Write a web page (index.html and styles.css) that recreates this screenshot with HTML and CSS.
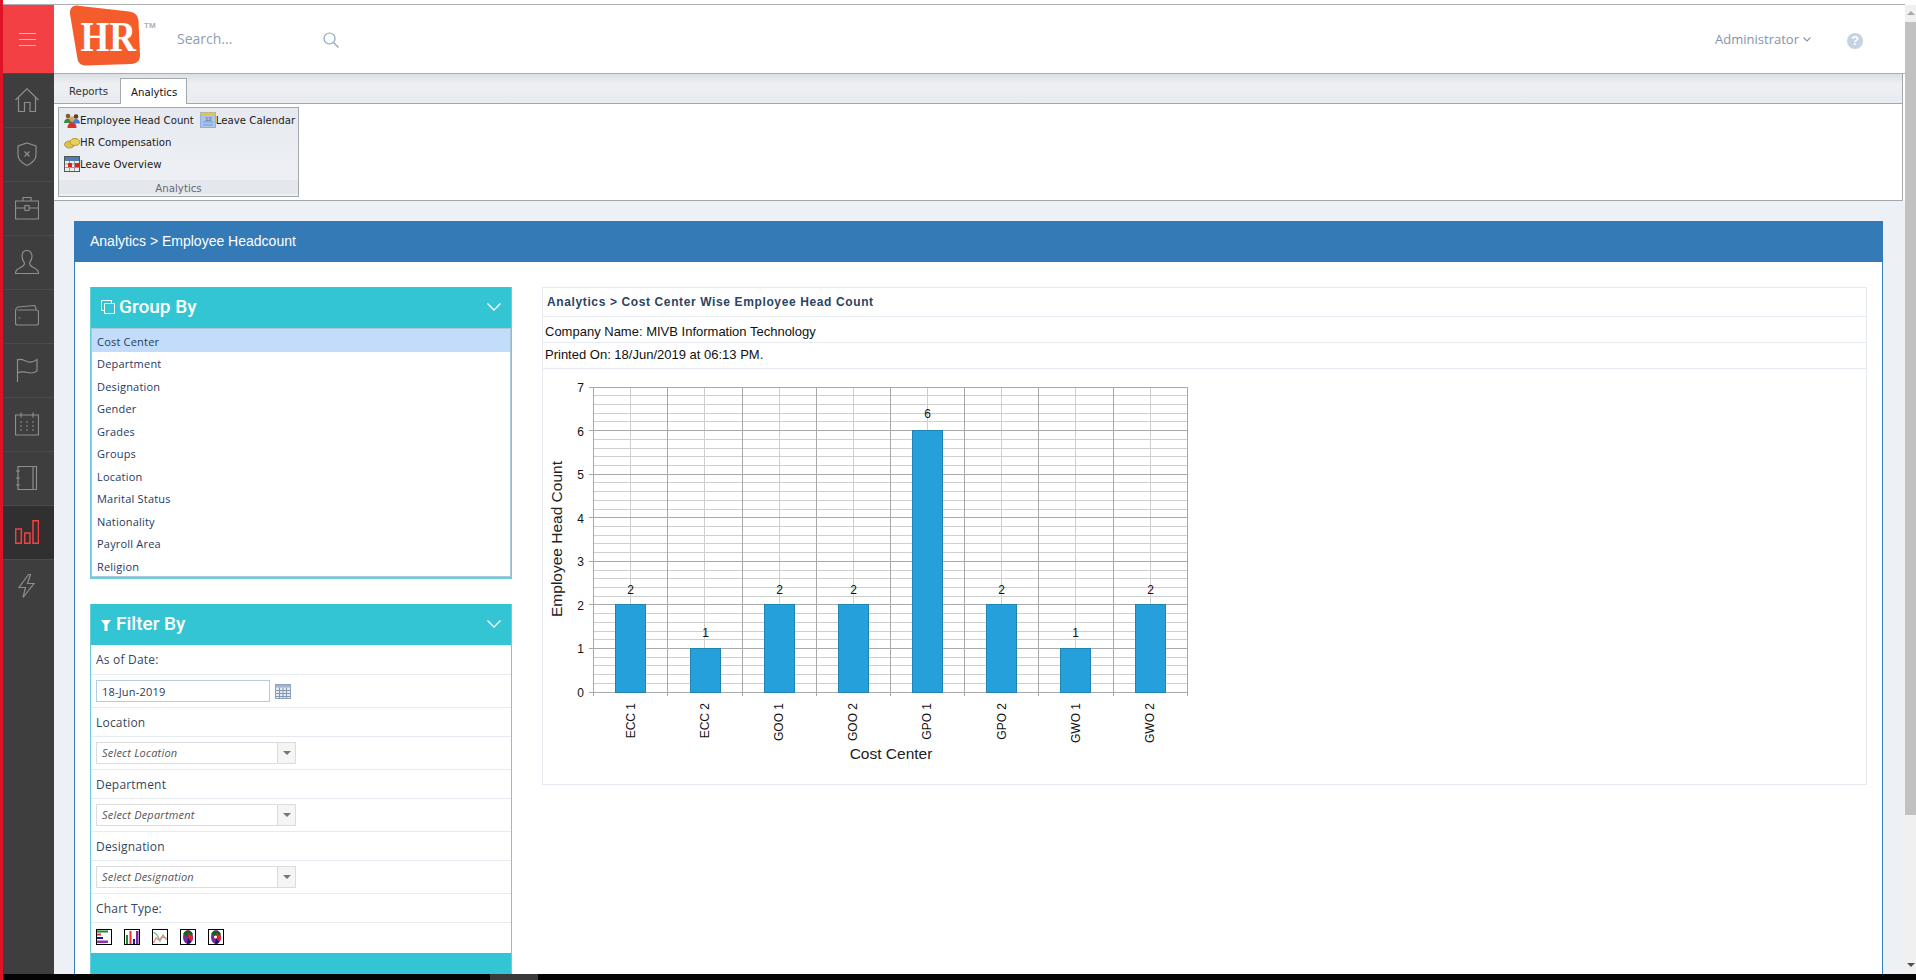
FILE: index.html
```html
<!DOCTYPE html>
<html lang="en">
<head>
<meta charset="utf-8">
<title>Analytics - Employee Headcount</title>
<link rel="stylesheet" href="styles.css">
</head>
<body>
<div class="page">
  <div class="edge"></div>
  <div class="rest">
    <div class="work">
      <div class="app">
        <nav class="sidebar">
          <div class="menu-btn"><span></span><span></span><span></span></div>
          <div class="nav-item"><svg class="nav-icon" viewBox="0 0 24 24"><path d="M.5 12 12 .8 23.5 12M3.5 9.5V23.5H9.5V14.5H15V23.5H20.5V9.5"/></svg></div>
          <div class="nav-item"><svg class="nav-icon" viewBox="0 0 24 24"><path d="M12 1 21 4V13C21 18 16 21.5 12 23.5 8 21.5 3 18 3 13V4ZM9.5 9.5l5 5m0-5-5 5"/></svg></div>
          <div class="nav-item"><svg class="nav-icon" viewBox="0 0 24 24"><path d="M.5 5H23.5V23H.5ZM8 5V1.5H16V5M.5 12H10M14 12H23.5M10 9.5H14V14.5H10Z"/></svg></div>
          <div class="nav-item"><svg class="nav-icon" viewBox="0 0 24 24"><path d="M12 .5C8.500.5 7 3.500 7 6.500 7 9.500 8.500 11.500 9.500 13 9.500 16 7.500 16.500 4.500 18 1.500 19.500.5 20.500.5 23.500H23.500C23.500 20.500 22.500 19.500 19.500 18 16.500 16.500 14.500 16 14.500 13 15.500 11.500 17 9.500 17 6.500 17 3.500 15.500.5 12 .5Z"/></svg></div>
          <div class="nav-item"><svg class="nav-icon" viewBox="0 0 24 24"><path d="M2.500 6H21.500Q23.500 6 23.500 8V19Q23.500 21 21.500 21H2.500Q.5 21 .5 19V8C.5 4.500 1 3.500 3 3L19 1.500Q21 1.500 21 6M3.500 14H5.500"/></svg></div>
          <div class="nav-item"><svg class="nav-icon" viewBox="0 0 24 24"><path d="M2.500 1V24.500M2.500 2C7 0 9.500 3 13.500 4 17.500 5 20 3 22 1.500V13C19 15 16 15.500 13 14.500 9 13.500 6 13.500 2.500 14.500"/></svg></div>
          <div class="nav-item"><svg class="nav-icon" viewBox="0 0 24 24"><path d="M.5 3H23.500V23H.5ZM6 .5V5.500M18 .5V5.500M5 10H7M11 10H13M17 10H19M5 14H7M11 14H13M17 14H19M5 18H7M11 18H13M17 18H19"/></svg></div>
          <div class="nav-item"><svg class="nav-icon" viewBox="0 0 24 24"><path d="M3 .5H21.500V23.500H3ZM18 .5V23.500M1 5H5M1 12H5M1 19H5"/></svg></div>
          <div class="nav-item active"><svg class="nav-icon" viewBox="0 0 24 24"><path d="M.7 9H6.300V23.300H.7ZM9.700 13H15V23.300H9.700ZM18 .7H23.500V23.300H18Z"/></svg></div>
          <div class="nav-item"><svg class="nav-icon" viewBox="0 0 24 24"><path d="M13.500.5 4 13.500H10.500L8 23.500 19 9.500H12.500L15.500.5Z"/></svg></div>
        </nav>
        <div class="main">
          <header class="topbar">
            <div class="logo">
              <svg class="logo-mark" viewBox="0 0 72 61"><path class="logo-shape" d="M1 9C.5 3 4 0 9 .7L60 6.500C66 7.500 69 10 69.500 16L71 50C71.300 56 68 58.500 62 59L17 60.500C12 60.500 9.500 58 8.500 54Z"/><text class="logo-text" transform="translate(11.500 46) scale(1 1.130)">HR</text></svg>
              <span class="tm">TM</span>
            </div>
            <div class="search">Search...</div>
            <svg class="search-icon" viewBox="0 0 16 16"><circle cx="6.500" cy="6.500" r="5.500"/><path d="M10.500 10.500 15.500 15.500"/></svg>
            <div class="user">Administrator<svg class="user-chev" viewBox="0 0 8 5"><path d="M.5.5 4 4 7.500.5"/></svg></div>
            <div class="help">?</div>
          </header>
          <section class="ribbon">
            <div class="ribbon-tabs">
              <span class="rtab">Reports</span>
              <span class="rtab current">Analytics</span>
            </div>
            <div class="ribbon-body">
              <div class="rgroup">
                <div class="rgroup-items">
                  <div class="ritem-line">
                    <span class="ritem"><svg class="ricon" viewBox="0 0 16 16"><circle cx="4" cy="4" r="2.300" fill="#8a5a2b"/><path d="M0 11c0-3 2-4.500 4-4.500S8 8 8 11Z" fill="#3d8a3a"/><circle cx="12" cy="4.500" r="2.300" fill="#5b3d20"/><path d="M8 11.500c0-3 2-4.500 4-4.500s4 1.500 4 4.500Z" fill="#3d7fd0"/><circle cx="8" cy="7" r="2.500" fill="#e0a060"/><path d="M3.500 16c0-4 2-5.500 4.500-5.500S12.500 12 12.500 16Z" fill="#d8302a"/></svg>Employee Head Count</span>
                    <span class="ritem second"><svg class="ricon" viewBox="0 0 16 16"><rect x=".5" y=".5" width="15" height="15" fill="#a9c4ea" stroke="#8fb0e0"/><rect x=".5" y=".5" width="15" height="2.500" fill="#e3c34a"/><path d="M3 10h10M3 13h10" stroke="#7c9cc8"/><text class="ricon-num" x="5" y="9">12</text></svg>Leave Calendar</span>
                  </div>
                  <div class="ritem-line"><span class="ritem"><svg class="ricon" viewBox="0 0 16 16"><ellipse cx="5.500" cy="10.500" rx="5" ry="3.500" fill="#dcc24a" stroke="#b59a2c"/><ellipse cx="11" cy="8" rx="5" ry="3.500" fill="#e8d060" stroke="#b59a2c"/></svg>HR Compensation</span></div>
                  <div class="ritem-line"><span class="ritem"><svg class="ricon" viewBox="0 0 16 16"><rect x=".5" y=".5" width="15" height="15" fill="#eee" stroke="#555"/><rect x="1" y="1" width="14" height="4" fill="#4f7fb0"/><path d="M1 8h14M1 11.500h14M5.500 5v10M10.500 5v10" stroke="#999"/><rect x="4" y="7" width="4" height="4" fill="#e02020"/><rect x="11" y="7" width="4" height="4" fill="#e02020"/></svg>Leave Overview</span></div>
                </div>
                <div class="rgroup-label">Analytics</div>
              </div>
            </div>
          </section>
          <div class="content">
            <div class="panel">
              <div class="panel-head">Analytics &gt; Employee Headcount</div>
              <div class="panel-body">
                <aside class="side">
                  <div class="box">
                    <div class="box-head">
                      <svg class="box-icon" viewBox="0 0 14 14"><path d="M3.500 3.500H13.500V13.500H3.500ZM3 10.500H.5V.5H10.500V3"/></svg>
                      <span class="box-title">Group By</span>
                      <svg class="box-chev" viewBox="0 0 14 8"><path d="M.5.5 7 7 13.500.5"/></svg>
                    </div>
                    <ul class="group-list">
                      <li class="selected">Cost Center</li>
                      <li>Department</li>
                      <li>Designation</li>
                      <li>Gender</li>
                      <li>Grades</li>
                      <li>Groups</li>
                      <li>Location</li>
                      <li>Marital Status</li>
                      <li>Nationality</li>
                      <li>Payroll Area</li>
                      <li>Religion</li>
                    </ul>
                  </div>
                  <div class="box filter">
                    <div class="box-head">
                      <svg class="funnel" viewBox="0 0 10 11"><path d="M0 0H10L6.500 4.500V11H3.500V4.500Z"/></svg>
                      <span class="box-title">Filter By</span>
                      <svg class="box-chev" viewBox="0 0 14 8"><path d="M.5.5 7 7 13.500.5"/></svg>
                    </div>
                    <div class="frow label first">As of Date:</div>
                    <div class="frow field">
                      <input class="date-input" type="text" value="18-Jun-2019">
                      <svg class="cal" viewBox="0 0 16 15"><rect x=".5" y=".5" width="15" height="14" fill="#e4eaf2" stroke="#8fa2bb"/><rect x="1" y="1" width="14" height="2.500" fill="#a3b4cb"/><path d="M1 6.500H15M1 9.500H15M1 12.500H15M4.500 3.500V14M8 3.500V14M11.500 3.500V14" stroke="#8398b5"/></svg>
                    </div>
                    <div class="frow label">Location</div>
                    <div class="frow field"><div class="combo"><span class="combo-text">Select Location</span><span class="combo-btn"></span></div></div>
                    <div class="frow label">Department</div>
                    <div class="frow field"><div class="combo"><span class="combo-text">Select Department</span><span class="combo-btn"></span></div></div>
                    <div class="frow label">Designation</div>
                    <div class="frow field"><div class="combo"><span class="combo-text">Select Designation</span><span class="combo-btn"></span></div></div>
                    <div class="frow label">Chart Type:</div>
                    <div class="frow types">
                      <svg class="ctype" viewBox="0 0 16 16"><rect x=".5" y=".5" width="15" height="15" fill="#fff" stroke="#000"/><rect x="1" y="1.500" width="11" height="2" fill="#1c8a2c"/><rect x="1" y="4.500" width="4" height="2" fill="#ee3030"/><rect x="1" y="8" width="6" height="2" fill="#1a1a90"/><rect x="1" y="11.500" width="11" height="2.500" fill="#9a30a8"/></svg>
                      <svg class="ctype" viewBox="0 0 16 16"><rect x=".5" y=".5" width="15" height="15" fill="#fff" stroke="#000"/><rect x="2" y="6" width="2" height="9" fill="#1c8a2c"/><rect x="5.500" y="2" width="2" height="13" fill="#ee3030"/><rect x="9" y="10" width="2" height="5" fill="#1a1a90"/><rect x="12" y="2" width="2.500" height="13" fill="#7a2a98"/></svg>
                      <svg class="ctype" viewBox="0 0 16 16"><rect x=".5" y=".5" width="15" height="15" fill="#fff" stroke="#000"/><path d="M1.500 3 5 6 8 12 11 6 14.500 11" fill="none" stroke="#6fc080" stroke-width="1.300"/><path d="M1.500 14 4 9 7 11 10 8 14.500 9" fill="none" stroke="#f5808a" stroke-width="1.300"/></svg>
                      <svg class="ctype" viewBox="0 0 16 16"><rect x=".5" y=".5" width="15" height="15" fill="#fff" stroke="#000"/><ellipse cx="8" cy="8" rx="5" ry="7" fill="#7a2a98"/><path d="M3.200 5C4 1 12 1 12.800 5L8 8Z" fill="#0a6a18"/><path d="M8 4 13 8C13 10 12.500 12 11.500 12.500L8.500 9Z" fill="#ee2020"/><path d="M8 9 11 13C10 15 8 15 7 14.500Z" fill="#14147a"/></svg>
                      <svg class="ctype" viewBox="0 0 16 16"><rect x=".5" y=".5" width="15" height="15" fill="#fff" stroke="#000"/><ellipse cx="8" cy="8" rx="5" ry="7" fill="#7a2a98"/><path d="M3.200 5C4 1 12 1 12.800 5L8 8Z" fill="#0a6a18"/><path d="M8 4 13 8C13 10 12.500 12 11.500 12.500L8.500 9Z" fill="#ee2020"/><path d="M8 9 11 13C10 15 8 15 7 14.500Z" fill="#14147a"/><circle cx="7.500" cy="8" r="1.500" fill="#fff"/></svg>
                    </div>
                    <div class="box-foot"></div>
                  </div>
                </aside>
                <section class="report">
                  <div class="report-title">Analytics &gt; Cost Center Wise Employee Head Count</div>
                  <div class="report-line company">Company Name: MIVB Information Technology</div>
                  <div class="report-line printed">Printed On: 18/Jun/2019 at 06:13 PM.</div>
                  <div class="chart-wrap">
                    <svg class="chart" width="660" height="400" viewBox="0 0 660 400">
                      <path class="grid-minor" d="M50 26.700H644M50 35.400H644M50 44.100H644M50 52.900H644M50 70.300H644M50 79H644M50 87.700H644M50 96.400H644M50 113.900H644M50 122.600H644M50 131.300H644M50 140H644M50 157.400H644M50 166.100H644M50 174.800H644M50 183.600H644M50 201H644M50 209.700H644M50 218.400H644M50 227.100H644M50 244.600H644M50 253.300H644M50 262H644M50 270.700H644M50 288.100H644M50 296.900H644M50 305.600H644M50 314.300H644M87 18V323M161 18V323M236 18V323M310 18V323M384 18V323M458 18V323M532 18V323M607 18V323"/>
                      <path class="grid-major" d="M46 18H644M46 61.600H644M46 105.100H644M46 148.700H644M46 192.300H644M46 235.900H644M46 279.400H644M46 323H644M50 18V327M124 18V327M199 18V327M273 18V327M347 18V327M421 18V327M495 18V327M570 18V327M644 18V327"/>
                      <rect class="bar" x="72.500" y="235.900" width="30" height="87.100"/>
                      <rect class="bar" x="147.500" y="279.400" width="30" height="43.600"/>
                      <rect class="bar" x="221.500" y="235.900" width="30" height="87.100"/>
                      <rect class="bar" x="295.500" y="235.900" width="30" height="87.100"/>
                      <rect class="bar" x="369.500" y="61.600" width="30" height="261.400"/>
                      <rect class="bar" x="443.500" y="235.900" width="30" height="87.100"/>
                      <rect class="bar" x="517.500" y="279.400" width="30" height="43.600"/>
                      <rect class="bar" x="592.500" y="235.900" width="30" height="87.100"/>
                      <g class="val">
                        <text x="87.500" y="225">2</text><text x="162.500" y="268">1</text><text x="236.500" y="225">2</text><text x="310.500" y="225">2</text><text x="384.500" y="49">6</text><text x="458.500" y="225">2</text><text x="532.500" y="268">1</text><text x="607.500" y="225">2</text>
                      </g>
                      <g class="ytick">
                        <text x="41" y="23">7</text><text x="41" y="67">6</text><text x="41" y="110">5</text><text x="41" y="154">4</text><text x="41" y="197">3</text><text x="41" y="241">2</text><text x="41" y="284">1</text><text x="41" y="328">0</text>
                      </g>
                      <g class="xtick">
                        <text transform="translate(92 334) rotate(-90)">ECC 1</text>
                        <text transform="translate(166 334) rotate(-90)">ECC 2</text>
                        <text transform="translate(240 334) rotate(-90)">GOO 1</text>
                        <text transform="translate(314 334) rotate(-90)">GOO 2</text>
                        <text transform="translate(388 334) rotate(-90)">GPO 1</text>
                        <text transform="translate(463 334) rotate(-90)">GPO 2</text>
                        <text transform="translate(537 334) rotate(-90)">GWO 1</text>
                        <text transform="translate(611 334) rotate(-90)">GWO 2</text>
                      </g>
                      <text class="axis" x="348" y="390">Cost Center</text>
                      <text class="axis" transform="translate(19 170) rotate(-90)">Employee Head Count</text>
                    </svg>
                  </div>
                </section>
              </div>
            </div>
          </div>
        </div>
      </div>
      <div class="vscroll"><span class="arrow up"></span><span class="vthumb"></span><span class="arrow down"></span></div>
    </div>
    <div class="hscroll"><span class="hthumb"></span></div>
  </div>
</div>
</body>
</html>
```

FILE: styles.css
```css
* { box-sizing: border-box; }
html, body { margin: 0; padding: 0; height: 100%; overflow: hidden; background: #fff; }
body { font-family: "Open Sans", "Liberation Sans", sans-serif; color: #1f3a5f; }
.page { display: flex; width: 1916px; height: 980px; }
.edge { width: 3px; background: #dd1427; flex: none; }
.rest { flex: 1; display: flex; flex-direction: column; min-width: 0; }
.work { flex: 1; display: flex; min-height: 0; }
.hscroll { height: 6px; background: #040404; flex: none; padding-left: 487px; }
.hthumb { display: block; width: 48px; height: 6px; background: #3a3a3a; }

.app { flex: 1; display: flex; min-width: 0; padding-top: 4px; position: relative; border-top: 0; }
.app::before { content: ""; position: absolute; left: 0; right: 0; top: 4px; height: 1px; background: #adb0b3; }
.sidebar { width: 51px; flex: none; margin-top: 1px; background: #3e3e3e; display: flex; flex-direction: column; }
.menu-btn { height: 68px; background: #f24044; display: flex; flex-direction: column; justify-content: center; align-items: center; gap: 5px; padding-right: 3px; }
.menu-btn span { display: block; width: 17px; height: 1px; background: #f9b4b6; }
.nav-item { height: 54px; flex: none; border-top: 1px solid #4a4a4a; padding: 14px 0 0 12px; }
.nav-item.active { background: #303030; }
.nav-icon { display: block; width: 24px; height: 24px; fill: none; stroke: #8e8e8e; stroke-width: 1.2; }
.nav-item.active .nav-icon { stroke: #f24044; stroke-width: 1.5; }

.main { flex: 1; min-width: 0; display: flex; flex-direction: column; margin-top: 1px; }
.topbar { height: 69px; flex: none; background: #fff; border-bottom: 1px solid #a9aeb5; display: flex; align-items: flex-start; }
.logo { width: 123px; flex: none; padding-left: 15px; display: flex; }
.logo-mark { width: 72px; height: 61px; flex: none; }
.logo-shape { fill: #f45d2b; }
.logo-text { font-family: "Liberation Serif", serif; font-weight: 700; font-size: 37px; fill: #fff; }
.tm { font-family: "Liberation Sans", sans-serif; font-size: 8px; font-weight: 700; color: #aab0b5; margin: 16px 0 0 3px; }
.search { width: 146px; font-size: 14px; line-height: 18px; color: #8d9fb3; margin-top: 25px; }
.search-icon { width: 16px; height: 16px; margin-top: 27px; fill: none; stroke: #8fa3b8; stroke-width: 1.2; }
.user { margin: 25px 0 0 auto; font-size: 13px; line-height: 18px; color: #7f95ad; display: flex; align-items: center; }
.user-chev { width: 8px; height: 5px; margin-left: 4px; fill: none; stroke: #7f95ad; stroke-width: 1.1; }
.help { width: 16px; height: 16px; border-radius: 50%; background: #c4d2e2; color: #fff; margin: 28px 42px 0 36px; font: 700 13px/16px "Liberation Sans", sans-serif; text-align: center; }

.ribbon { width: 1849px; height: 127px; flex: none; background: #fff; border-right: 1px solid #a3a8ad; border-bottom: 1px solid #a3a8ad; font-family: "DejaVu Sans", sans-serif; font-size: 10.200px; display: flex; flex-direction: column; }
.ribbon-tabs { height: 30px; flex: none; background: linear-gradient(#dcdfe5, #edeff3 35%, #e8ecf1); border-bottom: 1px solid #a3a8ad; padding-left: 0; display: flex; align-items: flex-end; position: relative; }
.rtab { display: block; padding: 0 11px 0 15px; width: 66px; height: 25px; line-height: 28px; color: #333; }
.rtab.current { width: 67px; margin-bottom: -1px; height: 26px; padding: 0 0 0 10px; background: #fff; border: 1px solid #a3a8ad; border-bottom: 0; color: #111; line-height: 27px; }
.ribbon-body { flex: 1; padding: 3px 0 0 4px; background: #fff; }
.rgroup { width: 241px; height: 90px; border: 1px solid #a3a8ad; background: linear-gradient(#e6eaf0, #eef0f5 85%); color: #222; display: flex; flex-direction: column; }
.rgroup-items { flex: 1; padding: 1px 0 0 5px; }
.ritem-line { height: 22px; display: flex; align-items: center; }
.ritem { display: flex; align-items: center; white-space: nowrap; }
.ritem.second { margin-left: 6px; }
.ricon { width: 16px; height: 16px; flex: none; }
.ricon-num { font: 700 6px "Liberation Sans", sans-serif; fill: #5b7fb0; }
.rgroup-label { height: 14px; line-height: 17px; text-align: center; background: #e4e8ed; color: #667; flex: none; margin-bottom: 2px; }

.content { flex: 1; min-height: 0; background: #edf1f6; padding: 20px 22px 0 20px; overflow: hidden; }
.panel { height: 100%; display: flex; flex-direction: column; }
.panel-head { height: 41px; flex: none; background: #337ab7; color: #fff; font: 14px/41px "Liberation Sans", sans-serif; padding-left: 16px; }
.panel-body { flex: 1; min-height: 0; overflow: hidden; background: #fff; border-left: 1px solid #337fc0; border-right: 1px solid #337fc0; padding: 25px 15px 0; display: flex; gap: 30px; }

.side { width: 422px; flex: none; }
.box { background: #33c5d3; border: 1px solid #63d0dc; border-width: 0 1px 2px; }
.box.filter { margin-top: 25px; border-bottom: 0; }
.box-head { height: 41px; display: flex; align-items: center; padding: 0 10px 1px 10px; color: #fff; background: #33c5d3; }
.box-icon { width: 14px; height: 14px; margin-right: 4px; flex: none; fill: none; stroke: #fff; stroke-width: 1; }
.funnel { width: 10px; height: 11px; margin-right: 5px; flex: none; fill: #fff; margin-top: 3px; }
.box-title { flex: 1; font: 500 19px/24px Roboto, sans-serif; }
.box-chev { width: 14px; height: 8px; flex: none; fill: none; stroke: #fff; stroke-width: 1.3; }
.group-list { list-style: none; margin: 0; padding: 0; background: #fff; border: 1px solid #a9c8d8; font-size: 11px; height: 249px; }
.group-list li { height: 22.500px; line-height: 22.500px; padding: 1.500px 0 0 5px; letter-spacing: .2px; }
.group-list .selected { background: #c2dcfa; }

.frow { background: #fff; border-bottom: 1px solid #e6ebf1; display: flex; align-items: center; padding-left: 5px; }
.label { height: 29px; font-size: 12px; letter-spacing: .2px; color: #33475f; }
.label.first { height: 30px; }
.field { height: 33px; }
.date-input { width: 174px; height: 22px; border: 1px solid #b5cbe0; padding: 0 5px; margin: 0; font: 11px "Open Sans", sans-serif; letter-spacing: .2px; color: #1f3a5f; outline: 0; border-radius: 0; }
.cal { width: 16px; height: 15px; margin-left: 5px; }
.combo { width: 200px; height: 22px; border: 1px solid #dcdcdc; display: flex; }
.combo-text { flex: 1; font: italic 11px/20px "Open Sans", sans-serif; letter-spacing: .2px; padding-left: 5px; color: #555; }
.combo-btn { width: 18px; background: #f5f5f5; border-left: 1px solid #dcdcdc; position: relative; }
.combo-btn::after { content: ""; position: absolute; left: 5px; top: 8px; border: 4px solid transparent; border-top: 4px solid #777; border-bottom: 0; }
.types { height: 30px; gap: 12px; border-bottom: 0; padding-bottom: 2px; }
.ctype { width: 16px; height: 16px; }
.box-foot { height: 21px; background: #33c5d3; }

.report { flex: 1; min-width: 0; height: 498px; border: 1px solid #e6ebf1; background: #fff; }
.report-title { height: 29px; border-bottom: 1px solid #e6ebf1; font: 700 12px/29px "Liberation Sans", sans-serif; letter-spacing: .62px; color: #2c4560; padding-left: 4px; }
.report-line { height: 26px; border-bottom: 1px solid #e6ebf1; font: 13px/23px "Liberation Sans", sans-serif; color: #111; padding-left: 2px; }
.company { line-height: 30px; }
.printed { line-height: 24px; }
.chart-wrap { padding-left: 0; }
.chart { display: block; }
.grid-minor { fill: none; stroke: #cfcfcf; stroke-width: 1; shape-rendering: crispEdges; }
.grid-major { fill: none; stroke: #a9a9a9; stroke-width: 1; shape-rendering: crispEdges; }
.bar { fill: #25a0da; stroke: #1f83b4; stroke-width: 1; shape-rendering: crispEdges; }
.val text { font: 12px "Liberation Sans", sans-serif; text-anchor: middle; fill: #111; }
.ytick text { font: 12px "Liberation Sans", sans-serif; text-anchor: end; fill: #111; }
.xtick text { font: 12px "Liberation Sans", sans-serif; text-anchor: end; fill: #111; }
.axis { font: 15.500px "Liberation Sans", sans-serif; text-anchor: middle; fill: #222; }

.vscroll { width: 11px; flex: none; background: #f0f0f0; padding-top: 22px; position: relative; border-top: 5px solid #fff; margin-left: 0; }
.vthumb { display: block; width: 11px; height: 793px; background: #c1c1c1; margin-top: -5px; }
.arrow { position: absolute; left: 2px; border: 4px solid transparent; }
.arrow.up { top: 6px; border-bottom: 4px solid #a8a8a8; border-top: 0; }
.arrow.down { top: 958px; border-top: 4px solid #505050; border-bottom: 0; }
```
